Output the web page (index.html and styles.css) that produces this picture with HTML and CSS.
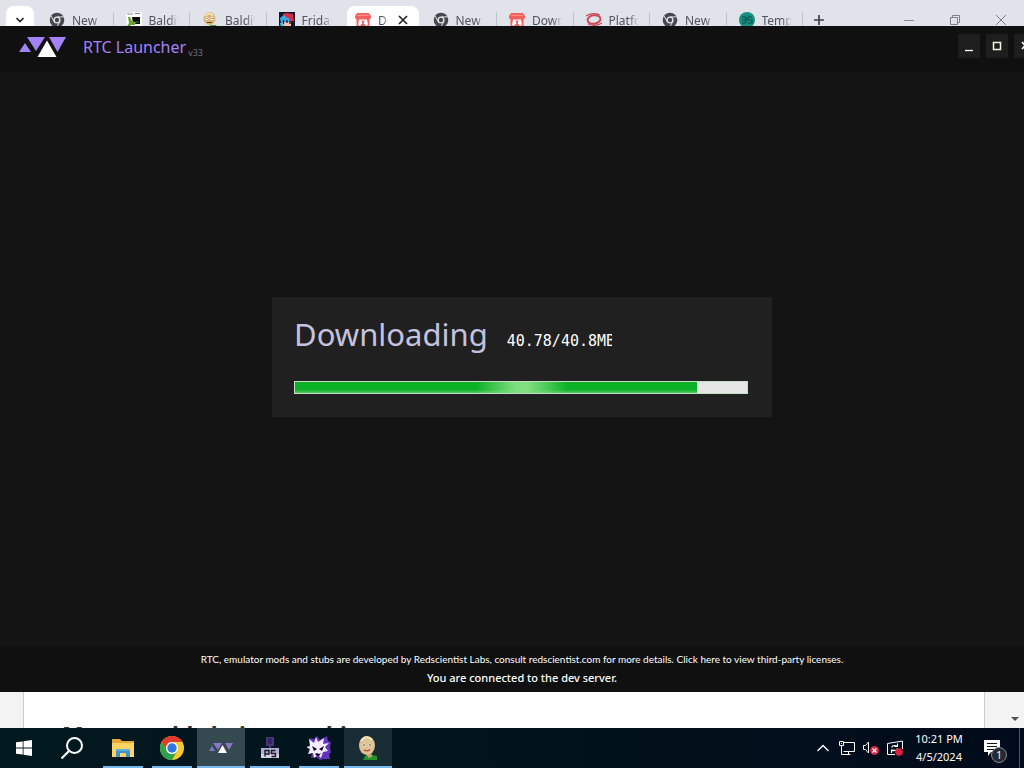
FILE: index.html
```html
<!DOCTYPE html>
<html lang="en">
<head>
<meta charset="utf-8">
<meta name="viewport" content="width=device-width, initial-scale=1">
<title>RTC Launcher</title>
<link rel="stylesheet" href="styles.css">
</head>
<body>
<svg class="defs" aria-hidden="true">
  <symbol id="chrome-grey" viewBox="0 0 16 16">
    <circle cx="8" cy="8" r="7.3" fill="#45484d"/>
    <circle cx="8" cy="8" r="3.6" fill="#e1e4e9"/>
    <circle cx="8" cy="8" r="2.2" fill="#45484d"/>
    <path d="M8 4.900h7M5.200 9.600 2 4M10.800 9.600 7.600 15.300" stroke="#e1e4e9" stroke-width="1"/>
  </symbol>
  <symbol id="itch" viewBox="0 0 16 16">
    <path d="M2 1h12l2 3v1.500c0 1-1 1.600-1.500 1.600V15h-13V7.100C1 7 0 6.500 0 5.500V4z" fill="#f5605f"/>
    <path d="M2 3.300h12" stroke="#f9a4a3" stroke-width=".8"/>
    <path d="M4 7.500h8l1 5.500-2 1-1.500-2h-3L5 14l-2-1z" fill="#fff"/>
    <path d="M8 8l2 2.200H8.800V12H7.200v-1.800H6z" fill="#f5605f"/>
  </symbol>
  <symbol id="rtc" viewBox="0 0 48 20">
    <path d="M0 15 6 6l6 9zM8 0h18l-9 14zM30 0h17l-8.500 15z" fill="#a382f5"/>
    <path d="M28 3.500 37.500 20h-19z" fill="#fff"/>
  </symbol>
</svg>
<div class="desktop">
  <header class="browser">
    <button class="tab-search" aria-label="Search tabs"><svg viewBox="0 0 10 10" width="10" height="10"><path d="M1.500 3 5 6.500 8.500 3" fill="none" stroke="#222" stroke-width="1.600"/></svg></button>
    <nav class="tabs">
      <a class="tab" href="#"><svg class="fav"><use href="#chrome-grey"/></svg><span class="tab-title">New</span></a>
      <a class="tab" href="#"><svg class="fav" viewBox="0 0 16 16"><path d="M0 1 16 0v16H1z" fill="#fff"/><path d="M1 2h6M9 1.500h5" stroke="#8a8a8a"/><path d="M6 5h8v7H7z" fill="#080c08"/><path d="M2 5h2l2 4 4 1-1 3H5L2 16H0l3-5z" fill="#65a530"/><path d="M10 9h3v2h-3z" fill="#214a20"/></svg><span class="tab-title">Baldi'</span></a>
      <a class="tab" href="#"><svg class="fav" viewBox="0 0 16 16"><ellipse cx="7.500" cy="6.500" rx="6" ry="6.500" fill="#d9b475"/><path d="M3 4q4-5 8 0" fill="none" stroke="#f7e5b8" stroke-width="2"/><circle cx="5" cy="6.500" r="1.500" fill="#fff"/><circle cx="10" cy="6.500" r="1.500" fill="#fff"/><path d="M4.500 6.500h1.200M9.500 6.500h1.200M5 10.500h5" stroke="#6b4325" stroke-width="1.200"/><path d="M8 13h6l2 3H7z" fill="#589448"/></svg><span class="tab-title">Baldi'</span></a>
      <a class="tab plain" href="#"><svg class="fav" viewBox="0 0 16 16"><path d="M0 0h16v16H0z" fill="#17142c"/><path d="M4 2 8 1l6 1 1 7-6 1-5-5z" fill="#d42d46"/><path d="m1 6 4-3 3 3 2 0 1 3-3 2-6 0z" fill="#3aa8e8"/><path d="M4 10h8v5H4z" fill="#f5c6ae"/><path d="M4.500 8v4M8 8v3M11 9v3" stroke="#17142c" stroke-width="1.300"/><path d="M1 11h3l2 4H2z" fill="#4ec4ef"/></svg><span class="tab-title">Friday</span></a>
      <a class="tab active plain" href="#" aria-current="page"><svg class="fav"><use href="#itch"/></svg><span class="tab-title">Download</span><svg class="close" viewBox="0 0 10 10"><path d="m1 1 8 8M9 1 1 9" stroke="#222" stroke-width="1.700"/></svg></a>
      <a class="tab" href="#"><svg class="fav"><use href="#chrome-grey"/></svg><span class="tab-title">New</span></a>
      <a class="tab" href="#"><svg class="fav"><use href="#itch"/></svg><span class="tab-title">Download</span></a>
      <a class="tab" href="#"><svg class="fav" viewBox="0 0 16 16"><g fill="none" stroke="#c94958"><ellipse cx="8" cy="7.500" rx="6.500" ry="4.300" stroke-width="2" transform="rotate(-8 8 7.500)"/><path d="M0 4q7-4 14-1M2 12q7 3 14-1" stroke-width="1.300"/></g></svg><span class="tab-title">Platform</span></a>
      <a class="tab" href="#"><svg class="fav"><use href="#chrome-grey"/></svg><span class="tab-title">New</span></a>
      <a class="tab" href="#"><svg class="fav" viewBox="0 0 16 16"><circle cx="8" cy="8" r="8" fill="#17917f"/><path d="M3 5h4M3 8h4M3 11h4M7 5v6M9 5h4M9 5v3h4v3H9" stroke="#0b4f4d" stroke-width="1.200" fill="none"/></svg><span class="tab-title">Template</span></a>
    </nav>
    <button class="new-tab" aria-label="New tab"><svg viewBox="0 0 12 12" width="12" height="12"><path d="M6 1v10M1 6h10" stroke="#3c4043" stroke-width="1.700"/></svg></button>
    <div class="browser-controls">
      <button aria-label="Minimize browser"><svg viewBox="0 0 12 12" width="12" height="12"><path d="M1 6.500h10" stroke="#888b92"/></svg></button>
      <button aria-label="Restore browser"><svg viewBox="0 0 12 12" width="12" height="12"><path d="M1.500 3.500h7v7h-7zM3.500 3V1.500h7v7H9" fill="none" stroke="#7c7f87"/></svg></button>
      <button aria-label="Close browser"><svg viewBox="0 0 12 12" width="12" height="12"><path d="m1 1 10 10M11 1 1 11" stroke="#7c7f87"/></svg></button>
    </div>
  </header>

  <div class="launcher-clip">
    <section class="launcher">
      <header class="titlebar">
        <svg class="logo" aria-hidden="true"><use href="#rtc"/></svg>
        <h1 class="app-name">RTC Launcher</h1>
        <span class="version">v33</span>
        <div class="app-controls">
          <button aria-label="Minimize"><svg viewBox="0 0 10 12" width="10" height="12"><path d="M1 10.500h8" stroke="#fff" stroke-width="1.300"/></svg></button>
          <button aria-label="Maximize"><svg viewBox="0 0 10 12" width="10" height="12"><path d="M1.500 2.500h7v7h-7z" fill="none" stroke="#f5f5df" stroke-width="1.500"/></svg></button>
          <button aria-label="Close"><svg viewBox="0 0 10 12" width="10" height="12"><path d="m2 2 6 7M8 2 2 9" stroke="#fff" stroke-width="1.600"/></svg></button>
        </div>
      </header>
      <main class="stage">
        <div class="card">
          <div class="status">
            <label class="status-title" for="download">Downloading</label>
            <span class="amount">40.78/40.8MB</span>
          </div>
          <progress class="bar" id="download" max="100" value="89"></progress>
        </div>
      </main>
      <footer class="credits">
        <a class="licenses" href="#">RTC, emulator mods and stubs are developed by Redscientist Labs, consult redscientist.com for more details. Click here to view third-party licenses.</a>
        <p class="server">You are connected to the dev server.</p>
      </footer>
    </section>
  </div>

  <div class="page">
    <article class="page-body"><h2 class="page-title">More worlds being working</h2></article>
    <div class="scroll"><svg viewBox="0 0 8 4" width="8" height="4"><path d="M0 0h8L4 4z" fill="#505050"/></svg></div>
  </div>

  <footer class="taskbar">
    <button class="task" aria-label="Start"><svg viewBox="0 0 16 16" width="16" height="16"><path d="M0 2.300 6.700 1.400v6.200H0zM7.500 1.300 16 0v7.600H7.500zM0 8.400h6.700v6.200L0 13.700zM7.500 8.400H16V16l-8.500-1.200z" fill="#fff"/></svg></button>
    <button class="task" aria-label="Search"><svg viewBox="0 0 24 24" width="24" height="24"><circle cx="14.500" cy="9.500" r="7.500" fill="none" stroke="#fff" stroke-width="2"/><path d="m9 15-7.500 7.500" stroke="#fff" stroke-width="2.200"/></svg></button>
    <div class="apps">
      <button class="task open" aria-label="File Explorer"><svg viewBox="0 0 22 20" width="22" height="20"><path d="M0 1h8l2 2h12v16H0z" fill="#e6a93a"/><path d="M0 5h22v14H0z" fill="#fcd463"/><path d="M4 11h14v8h-4v-4H8v4H4z" fill="#3f91c9"/><path d="M4 11h14v2H4z" fill="#5cb0df"/></svg></button>
      <button class="task open" aria-label="Chrome"><svg viewBox="0 0 24 24" width="24" height="24"><circle cx="12" cy="12" r="12" fill="#f9c92f"/><path d="M1.600 6A12 12 0 0 1 22.400 6H12a6 6 0 0 0-5.200 9z" fill="#e33b2e"/><path d="M1.600 6A12 12 0 0 0 12 24l5.200-9a6 6 0 0 1-10.400 0z" fill="#2da14d"/><circle cx="12" cy="12" r="6" fill="#fff"/><circle cx="12" cy="12" r="4.700" fill="#2f78e4"/></svg></button>
      <button class="task open current" aria-label="RTC Launcher"><svg viewBox="0 0 24 12" width="24" height="12"><path d="M0 9 3 4l3 5zM4 1h9L9 8zM16 1h8l-4 7z" fill="#8878c4"/><path d="m13.500 3 4.500 8H9z" fill="#fff"/></svg></button>
      <button class="task open" aria-label="PS tool"><svg viewBox="0 0 20 22" width="20" height="22"><path d="M6 0h8v9H6zM9 9h2v3H9z" fill="#483477"/><path d="M8 1h4v6H8z" fill="#372366"/><path d="M1 11h18v10H1z" fill="#aeb1cf"/><path d="M1 17h18v4H1z" fill="#d2d3e3"/><path d="M5 19.500v-6h4v3.500H5M15.500 13.500h-4v3h4v3h-4" fill="none" stroke="#20152f" stroke-width="1.400"/></svg></button>
      <button class="task open" aria-label="Game"><svg viewBox="0 0 24 24" width="24" height="24"><path d="m2 2 5 1 3-3 3 4 7-4 1 5 3 1-1 5 1 6-2 1 1 5-6 0-4 1-4-3-5 1 1-5-3-3 3-4z" fill="#6231bd"/><path d="m2 3 5 4 2-6 2 5 6-4-1 6 6-1-4 4 3 4-5 1-2 6-3-3-4 3-1-5-5 1 2-5-4-2 4-1z" fill="#f5edff"/><path d="m5 10 5 3-3 2zM17 10l-5 3 3 2zM8 18l2-1 2 1 2-1-2 3h-2z" fill="#160825"/></svg></button>
      <button class="task open hover" aria-label="Baldi"><svg viewBox="0 0 24 24" width="24" height="24"><path d="m9 20 4-3 4 2 4 1v4H7z" fill="#269229"/><path d="M10 16h5l1 5-4 1z" fill="#c6a270"/><ellipse cx="11" cy="9.500" rx="8" ry="9.500" fill="#dfc293"/><path d="M5 5q5-7 11-1" fill="none" stroke="#f4e4be" stroke-width="2"/><circle cx="8" cy="9" r="1.500" fill="#fff"/><circle cx="14" cy="9" r="1.500" fill="#fff"/><path d="M7.300 9h1.400M13.300 9h1.400" stroke="#49311b" stroke-width="1.400"/><path d="M8 14q3 2 6-.5" fill="none" stroke="#af463c" stroke-width="1.200"/></svg></button>
    </div>
    <div class="tray">
      <button aria-label="Show hidden icons"><svg viewBox="0 0 12 8" width="12" height="8"><path d="m.5 7 5.500-5.500L11.500 7" fill="none" stroke="#fff" stroke-width="1.300"/></svg></button>
      <button aria-label="Network"><svg viewBox="0 0 16 14" width="16" height="14"><path d="M4.500 1.500h11v9h-11M.5.500h4v4h-4zM2.500 4.500v9h9M9.500 10.500v3" fill="none" stroke="#fff"/><path d="M2 2h1v1H2z" fill="#fff"/></svg></button>
      <button aria-label="Volume, muted"><svg viewBox="0 0 16 14" width="16" height="14"><path d="M.5 4.500h2l3-3.500v11l-3-3.500h-2z" fill="none" stroke="#fff"/><circle cx="11.500" cy="9.500" r="4.500" fill="#cb2944"/><path d="m9.500 7.500 4 4m0-4-4 4" stroke="#fff" stroke-width="1.200"/></svg></button>
      <button aria-label="Update"><svg viewBox="0 0 18 16" width="18" height="16"><path d="M9 14.500H1.500v-11L16.500 1v8" fill="none" stroke="#fff"/><path d="M5.500 7.500Q7 4.500 11 6M11.500 3.500V6.500h-3M11.500 8.500Q10 11.500 6 10.500M5.500 13V10h3" fill="none" stroke="#fff" stroke-width="1.100"/><circle cx="13" cy="12" r="3.800" fill="#dc1f3c"/></svg></button>
      <button class="clock"><time datetime="2024-04-05T22:21">10:21 PM<br>4/5/2024</time></button>
      <button class="notes" aria-label="1 notification"><svg viewBox="0 0 16 16" width="16" height="16"><path d="M0 0h16v12H7l-3 4v-4H0z" fill="#fff"/><path d="M3 3.500h10M3 6.500h10M3 9.500h7" stroke="#07131f"/></svg><span class="badge">1</span></button>
    </div>
  </footer>
</div>
</body>
</html>
```
FILE: styles.css
```css
* { box-sizing: border-box; }
body {
  margin: 0;
  font-family: "Noto Sans", "Open Sans", sans-serif;
  font-size: 12px;
}
button {
  border: 0;
  padding: 0;
  background: none;
  color: inherit;
  font: inherit;
  display: flex;
  align-items: center;
  justify-content: center;
}
a { color: inherit; text-decoration: none; }
svg { flex: none; display: block; }
.defs { position: absolute; width: 0; height: 0; }
.desktop {
  height: 100vh;
  display: flex;
  flex-direction: column;
  overflow: hidden;
}

/* Browser tab strip */
.browser {
  flex: none;
  height: 26px;
  display: flex;
  overflow: hidden;
  background: #e0e3ea;
  padding-top: 6px;
}
.tab-search {
  width: 28px;
  height: 28px;
  margin: 0 3px 0 6px;
  border-radius: 8px;
  background: #fff;
}
.tabs { flex: 1; display: flex; min-width: 0; }
.tab {
  flex: 0 0 10%;
  min-width: 0;
  height: 28px;
  display: flex;
  align-items: center;
  gap: 7px;
  padding: 0 8px 0 12px;
  color: #50545b;
  background: linear-gradient(#bfc3ca, #bfc3ca) right center / 1px 16px no-repeat;
}
.tab.plain { background: none; }
.tab.active {
  flex-basis: calc(10% - 5px);
  background: #fff;
  border-radius: 8px 8px 0 0;
  margin: 0 2px 0 4px;
  padding: 0 11px 0 8px;
}
.fav { width: 16px; height: 16px; }
.tab-title {
  flex: 1;
  min-width: 0;
  overflow: hidden;
  white-space: nowrap;
  mask-image: linear-gradient(90deg, #000 60%, transparent 90%);
}
.tab.active .tab-title { mask-image: linear-gradient(90deg, #000 40%, transparent 80%); }
.close { width: 10px; height: 10px; }
.new-tab { width: 34px; height: 28px; }
.browser-controls { display: flex; width: 188px; padding-left: 50px; }
.browser-controls button { flex: 1; height: 28px; }

/* Launcher window, reaching past the right screen edge */
.launcher-clip { flex: 1; min-height: 0; overflow: hidden; display: flex; }
.launcher {
  flex: none;
  width: calc(100% + 20px);
  display: flex;
  flex-direction: column;
  background: #141414;
  color: #fff;
}
.titlebar {
  display: flex;
  align-items: flex-start;
  height: 46px;
  padding: 8px 8px 0 19px;
  background: #101010;
}
.logo { width: 48px; height: 20px; margin: 3px 16px 0 0; }
.app-name {
  margin: 0;
  font-size: 16px;
  line-height: 26px;
  font-weight: 400;
  color: #a382f5;
}
.version {
  margin: 12px 0 0 2px;
  font-family: "Open Sans", "Noto Sans", sans-serif;
  font-size: 9px;
  line-height: 14px;
  color: #77757d;
}
.app-controls { display: flex; gap: 6px; margin-left: auto; }
.app-controls button { width: 22px; height: 24px; background: #1e1e1e; }
.stage {
  flex: 1;
  display: flex;
  align-items: center;
  justify-content: center;
  padding-bottom: 4px;
}
.card {
  width: 500px;
  max-width: 100%;
  padding: 15px 24px 23px 22px;
  background: #202020;
}
.status { display: flex; align-items: baseline; gap: 19px; }
.status-title { font-size: 31px; line-height: 44px; color: #c5c2df; }
.amount {
  width: 105px;
  overflow: hidden;
  font: 15px/20px "DejaVu Sans Mono", monospace;
}
.bar {
  appearance: none;
  display: block;
  width: 100%;
  height: 13px;
  margin-top: 25px;
  border: 1px solid #c4dcc4;
  background: #e6e6e6;
}
.bar::-webkit-progress-bar { background: #e6e6e6; }
.bar::-webkit-progress-value {
  background:
    linear-gradient(90deg, #0bb02700 45%, #7fdf7f 55%, #7fdf7f 58%, #0bb02700 68%),
    linear-gradient(#0bb027 70%, #55c961);
}
.credits {
  height: 46px;
  display: flex;
  flex-direction: column;
  align-items: center;
  padding-top: 5px;
  background: #101010;
  white-space: nowrap;
}
.licenses {
  font-family: Lato, "Noto Sans", sans-serif;
  font-size: 10px;
  line-height: 16px;
}
.server { margin: 2px 0 0; font-size: 11px; line-height: 18px; font-weight: 500; }

/* Web page showing below the launcher */
.page { flex: none; height: 36px; display: flex; overflow: hidden; background: #f3f3f3; padding-left: 23px; }
.page-body { flex: 1; padding: 27px 38px 0; background: #fff; border: solid #ccc; border-width: 0 1px; }
.page-title { margin: 0; font-size: 23px; line-height: 32px; color: #333; white-space: nowrap; }
.scroll { width: 39px; display: flex; justify-content: flex-end; align-items: center; padding: 17px 5px 0 0; }

/* Taskbar */
.taskbar {
  flex: none;
  height: 40px;
  display: flex;
  background: linear-gradient(90deg, #02191f, #01131b 45%, #010b1b);
  color: #fff;
}
.task { width: 48px; height: 40px; }
.apps { display: flex; gap: 1px; margin-left: 3px; }
.task.open { background: linear-gradient(#76b9ed, #76b9ed) center bottom / 40px 2px no-repeat; }
.task.current { background: linear-gradient(#76b9ed, #76b9ed) bottom / 100% 2px no-repeat, #344a50; }
.task.hover { background: linear-gradient(#76b9ed, #76b9ed) bottom / 100% 2px no-repeat, #172c33; }
.tray { display: flex; margin-left: auto; padding-right: 4px; }
.tray button { width: 24px; height: 40px; }
.tray .clock { width: 64px; font-size: 11px; line-height: 18px; text-align: center; }
.tray .notes { width: 49px; padding-right: 6px; position: relative; border-right: 1px solid #465261; }
.badge {
  position: absolute;
  left: 20px;
  top: 19px;
  width: 16px;
  height: 16px;
  border: 1px solid #858b92;
  border-radius: 50%;
  background: #252b33;
  font-size: 10px;
  line-height: 14px;
}
```
